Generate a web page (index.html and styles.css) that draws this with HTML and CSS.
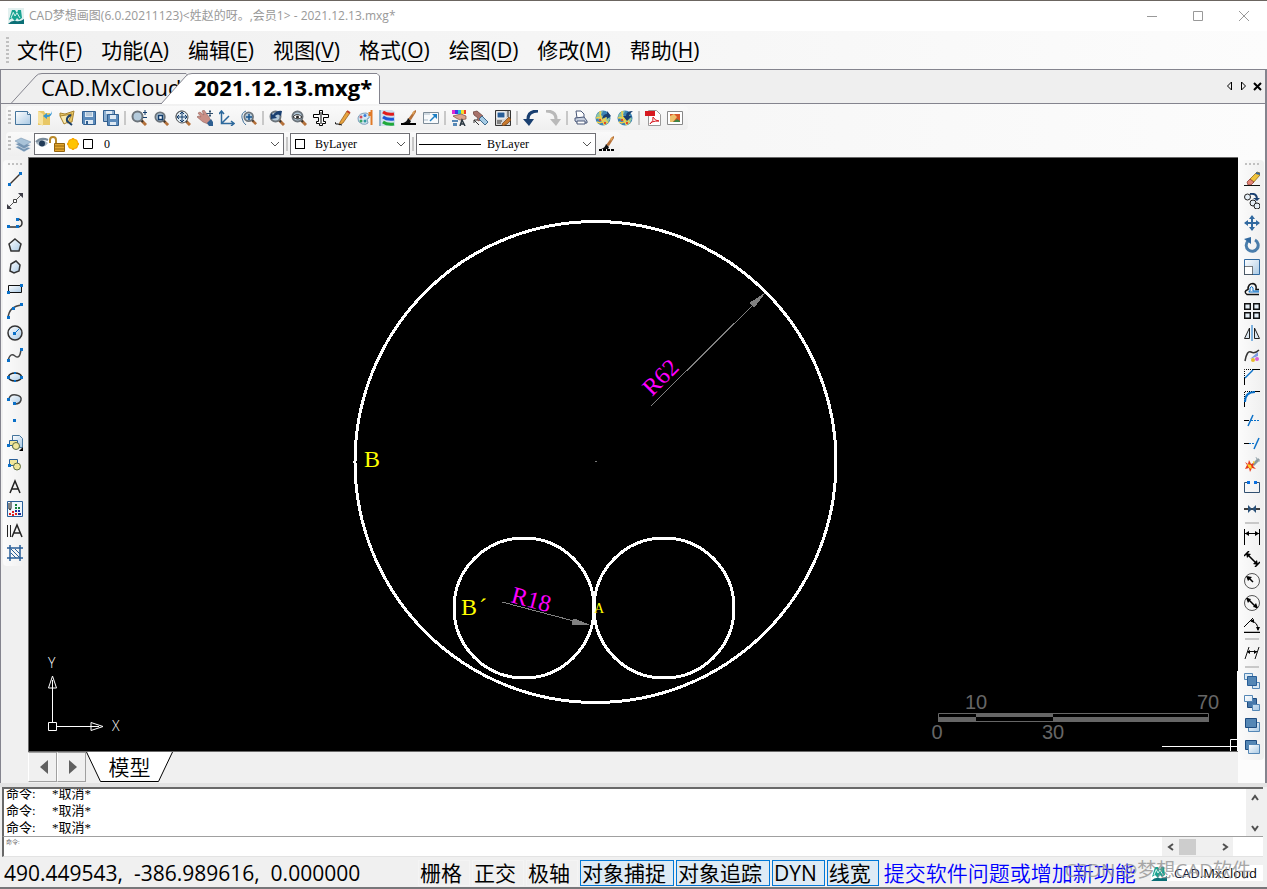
FILE: index.html
```html
<!DOCTYPE html>
<html lang="zh-CN">
<head>
    <meta charset="UTF-8">
    <meta name="viewport" content="width=device-width, initial-scale=1.0">
    <title>CAD梦想画图</title>
    <link rel="stylesheet" href="styles.css">
</head>
<body>

    <!-- shared symbols -->
    <svg class="defs" width="0" height="0" aria-hidden="true">
        <defs>
            <linearGradient id="sheet" x1="0" y1="0" x2="1" y2="1">
                <stop offset="0" stop-color="#ffffff"/>
                <stop offset="1" stop-color="#a9c9e4"/>
            </linearGradient>
            <symbol id="lens" viewBox="0 0 16 16">
                <path d="M10 10l5 5" stroke="#b5713a" stroke-width="3"/>
                <path d="M10 10l2 2" stroke="#333" stroke-width="2"/>
                <circle cx="6.500" cy="6.500" r="5" fill="#b4cbdc" stroke="#6c747b" stroke-width="2"/>
            </symbol>
            <symbol id="globe" viewBox="0 0 16 16">
                <circle cx="8" cy="8" r="7.500" fill="#3d84b4"/>
                <path d="M1 6q3-5 7-5l-2 4 3 2-5 3zM8 9l5-2 2 2-3 5-4 1z" fill="#8fc6a3"/>
                <path d="M2 12Q8 15 12 5M1 8q6-2 12 5M5 1q0 8 5 14" fill="none" stroke="#f2d04a" stroke-width="1.500"/>
                <path d="M4 9h2v2H4zM9 12h2v2H9z" fill="#e14b2a"/>
            </symbol>
            <symbol id="brush" viewBox="0 0 16 16">
                <path d="M7 9l6-8 2-1v2l-5 8z" fill="#b5713a"/>
                <path d="M11 3l2-2 1 1-2 3z" fill="#e0a45a"/>
                <path d="M7 8l3 3-1 2H2q4-1 5-5z" fill="#111"/>
            </symbol>
            <symbol id="logo" viewBox="0 0 16 16">
                <path d="M4 2h3l2 3 1-3h3l1 8-3 2-2-2-2 3-3-3-3 2z" fill="#1aa391"/>
                <path d="M5 4l2 4 2-3 3 5M3 10l2-5" stroke="#d8f4ee" fill="none"/>
                <path d="M0 16q4-4 8-3t8-2v5z" fill="#0b6f76"/>
            </symbol>
        </defs>
    </svg>

    <div class="window">
        <header class="titlebar">
            <svg class="app-icon" viewBox="0 0 16 16"><path d="M0 0h16v16H0z" fill="#e3f1f0"/><use href="#logo"/></svg>
            <h1>CAD梦想画图(6.0.20211123)&lt;姓赵的呀。,会员1&gt; - 2021.12.13.mxg*</h1>
            <div class="window-buttons">
                <button title="最小化"><svg viewBox="0 0 12 12"><path d="M1 6.500h10"/></svg></button>
                <button title="最大化"><svg viewBox="0 0 12 12"><path d="M1.500 1.500h9v9h-9z"/></svg></button>
                <button title="关闭"><svg viewBox="0 0 12 12"><path d="M1 1l10 10M11 1L1 11"/></svg></button>
            </div>
        </header>

        <nav class="menubar">
            <span class="grip"></span>
            <button>文件(<u>F</u>)</button>
            <button>功能(<u>A</u>)</button>
            <button>编辑(<u>E</u>)</button>
            <button>视图(<u>V</u>)</button>
            <button>格式(<u>O</u>)</button>
            <button>绘图(<u>D</u>)</button>
            <button>修改(<u>M</u>)</button>
            <button>帮助(<u>H</u>)</button>
        </nav>

        <div class="tabstrip">
            <button class="tab">
                <svg class="tab-shape" viewBox="0 0 178 31" preserveAspectRatio="none"><path d="M0 30.500L25 3q2-2.500 6-2.500h144l3 3" /></svg>
                <span>CAD.MxCloud</span>
            </button>
            <button class="tab active">
                <svg class="tab-shape" viewBox="0 0 219 31" preserveAspectRatio="none"><path d="M0 31L25 3q2-2.500 6-2.500h185l2.500 2.500v28" /></svg>
                <span>2021.12.13.mxg*</span>
            </button>
            <div class="tab-nav">
                <button title="上一个"><svg viewBox="0 0 10 10"><path d="M6.500 1v8L2.500 5z" fill="none" stroke="#000"/></svg></button>
                <button title="下一个"><svg viewBox="0 0 10 10"><path d="M2.500 1v8l4-4z" fill="none" stroke="#000"/></svg></button>
                <button title="关闭"><svg viewBox="0 0 10 10"><path d="M1 2l7 7M8 2L1 9" stroke="#000" stroke-width="2"/></svg></button>
            </div>
        </div>

        <div class="toolbars">
            <div class="toolbar">
                <span class="grip"></span>
                <button class="tool" title="新建"><svg viewBox="0 0 16 16"><path d="M.5 1.500h12l3 3v10H.5z" fill="url(#sheet)" stroke="#44749c"/><path d="M12.500 1.500v3h3" fill="#fff" stroke="#44749c"/></svg></button>
                <button class="tool" title="打开"><svg viewBox="0 0 16 16"><path d="M1 1h6l1 2h5v12H1z" fill="#e8c766"/><path d="M1 1l5 3v12l-5-3z" fill="#f7e3a0"/><path d="M15 1q-1 4-5 4V3L6 6l4 3V7q5 0 5-6z" fill="#3597d3"/></svg></button>
                <button class="tool" title="打开云图"><svg viewBox="0 0 16 16"><path d="M1 3l5 1 9-3-2 11-5 1-7-7z" fill="#e8c766" stroke="#a8832f"/><path d="M1 6l12-2-4 8-4 2z" fill="#f9e9ad" stroke="#a8832f"/><path d="M12 5q-5 2-4 6l5 4" stroke="#1c4069" stroke-width="2" fill="none"/></svg></button>
                <button class="tool" title="保存"><svg viewBox="0 0 16 16"><path d="M1.500 1.500h13v13h-12l-1-1z" fill="#5c8bbb" stroke="#315f90"/><path d="M4 2h8v5H4z" fill="#dfeaf4"/><path d="M5 3h6M5 5h6" stroke="#8fa8be"/><path d="M4 10h8v4H4z" fill="#dfeaf4"/><path d="M5 11h2v3H5z" fill="#315f90"/></svg></button>
                <button class="tool" title="另存为"><svg viewBox="0 0 16 16"><path d="M.5.5h11v11H.5z" fill="#8fb0d0" stroke="#315f90"/><path d="M3 1h6v3H3z" fill="#dfeaf4"/><path d="M4.500 4.500h11v11h-11z" fill="#5c8bbb" stroke="#315f90"/><path d="M7 5h6v4H7zM7 12h6v3H7z" fill="#dfeaf4"/></svg></button>
                <span class="sep"></span>
                <button class="tool" title="缩放"><svg viewBox="0 0 16 16"><use href="#lens"/><path d="M14 0v5M12 2.500h4M12 7.500h4" stroke="#123c6b"/></svg></button>
                <button class="tool" title="窗口缩放"><svg viewBox="0 0 16 16"><use href="#lens" x="1" y="1" width="15" height="15"/><path d="M5.500 5.500h4v4h-4z" fill="#fff" stroke="#123c6b" stroke-width="1.500"/></svg></button>
                <button class="tool" title="全部缩放"><svg viewBox="0 0 16 16"><use href="#lens"/><circle cx="7" cy="7" r="6" fill="#dce8f0" stroke="#555"/><path d="M7 2v10M2 7h10M5 4l2-2 2 2M5 10l2 2 2-2M4 5L2 7l2 2M10 5l2 2-2 2" fill="none" stroke="#123c6b"/></svg></button>
                <button class="tool" title="平移"><svg viewBox="0 0 16 16"><path d="M1 3l2-1 4 3-2-4 2-1 5 7 2 4-3 3-5-2-6-5 1-1 3 1z" fill="#c98f86" stroke="#8a5750" stroke-width=".5"/><path d="M10 13l4-4 2 3v4h-4z" fill="#2e5f91"/><path d="M13 0v7M9.500 3.500h7M12 1.500h2M12 5.500h2" stroke="#33516e"/></svg></button>
                <button class="tool" title="坐标系"><svg viewBox="0 0 16 16"><path d="M2.500 2v11.500H15M3 13l7-7M0 4l2.500-3L5 4M12 11l3 2.500-3 2.500" fill="none" stroke="#2c689c" stroke-width="1.500"/></svg></button>
                <button class="tool" title="实时缩放"><svg viewBox="0 0 16 16"><path d="M5 1Q0 3 1 8t4 7" stroke="#44749c" fill="none"/><use href="#lens" x="2" width="14" height="14" y="1"/><path d="M8 4v6M5 7h6" stroke="#17558f" stroke-width="1.500"/></svg></button>
                <span class="sep"></span>
                <button class="tool" title="上一视图"><svg viewBox="0 0 16 16"><use href="#lens"/><path d="M2 9V3l2 2q4-5 9-4l-1 5q-3-3-6 0l2 2z" fill="#193f70"/></svg></button>
                <button class="tool" title="动态观察"><svg viewBox="0 0 16 16"><use href="#lens"/><path d="M2 7q4-5 9 0-4 4-9 0z" fill="#fff" stroke="#333"/><circle cx="6.500" cy="7" r="1.500" fill="#222"/></svg></button>
                <button class="tool" title="捕捉"><svg viewBox="0 0 16 16"><path d="M6.500.5h3v4h6v3h-5v4h2v2h-3v2h-3v-2h-3v-2h2v-4h-5v-3h6z" fill="#fff" stroke="#000"/><path d="M8 2v12" stroke="#000"/></svg></button>
                <button class="tool" title="绘制"><svg viewBox="0 0 16 16"><path d="M5 12L12 1l3 2-7 10-4 2z" fill="#e8a33d" stroke="#8a5518" stroke-width=".7"/><path d="M12 1l3 2" stroke="#c23f2b" stroke-width="2"/><path d="M0 12q0 3 3 2l4 1" stroke="#111" fill="none"/></svg></button>
                <button class="tool" title="颜色"><svg viewBox="0 0 16 16"><path d="M1 8q1-5 8-5 4 1 3 5l-2 1 1 4q-2 2-6 1-5-2-4-6z" fill="#d7e7f1" stroke="#7ba0bd"/><circle cx="4" cy="7" r="1.500" fill="#d1495b"/><circle cx="8" cy="5.500" r="1.500" fill="#3b7dd8"/><circle cx="4" cy="11" r="1.500" fill="#3ba55d"/><circle cx="8" cy="11" r="1.500" fill="#2b9aa0"/><path d="M14.500 0v15M12.500 2v4" stroke="#e07a28" stroke-width="2"/></svg></button>
                <button class="tool" title="图层颜色"><svg viewBox="0 0 16 16"><path d="M0 0h13l3 2v14H0z" fill="#cfe0ee"/><path d="M4 2q4 3 11 2" stroke="#e01c1c" stroke-width="3" fill="none"/><path d="M4 7q4 3 11 2" stroke="#1b55d8" stroke-width="3" fill="none"/><path d="M4 12q4 3 11 2" stroke="#1fa83a" stroke-width="3" fill="none"/><path d="M1 0v16" stroke="#8fb2cc" stroke-width="2"/></svg></button>
                <button class="tool" title="线宽"><svg viewBox="0 0 16 16"><use href="#brush"/><path d="M0 13h15v2H0z" fill="#000"/></svg></button>
                <button class="tool" title="图框"><svg viewBox="0 0 16 16"><path d="M.5 2.500h15v11H.5z" fill="#f7fafc" stroke="#7d8c98"/><path d="M1 4h6M1 10h4" stroke="#a9bac7"/><path d="M7 11l5-5" stroke="#1c7fc4" stroke-width="1.500"/><path d="M9 4h5v5z" fill="#1c7fc4"/></svg></button>
                <span class="sep"></span>
                <button class="tool" title="特性"><svg viewBox="0 0 16 16"><path d="M1 0h3v4H1z" fill="#e02ad0"/><path d="M4 0h3v4H4z" fill="#4136e8"/><path d="M7 0h3v4H7z" fill="#23c0d8"/><path d="M10 0h3v4h-3z" fill="#f2de2c"/><path d="M13 0h2v4h-2z" fill="#ed402b"/><path d="M2 6l8-2 5 2v3l-6 1-4-2z" fill="#dba58c" stroke="#7d4c3e" stroke-width=".7"/><path d="M1 10h6v2H1zM2 13h4v3H2z" fill="#5587b5"/><path d="M9 16l2-6 3 6M10 14h3" stroke="#2a3640" fill="none" stroke-width="1.500"/></svg></button>
                <button class="tool" title="特性匹配"><svg viewBox="0 0 16 16"><path d="M0 2l4-1 6 5-4 5-2-1 1-2-4-3z" fill="#a8736b" stroke="#5e3b37" stroke-width=".7"/><path d="M6 9l3-3 6 6-3 3z" fill="#a5cbe5" stroke="#406b8d"/><path d="M6 15l-5-5v3M1 10h3" stroke="#333" fill="none"/></svg></button>
                <button class="tool" title="块编辑"><svg viewBox="0 0 16 16"><path d="M.5.5h15v15H.5z" fill="#d4d4d4" stroke="#333"/><path d="M2 2h8v6H2z" fill="#285e98" stroke="#fff"/><path d="M12 2h2M12 4h2M12 6h2M2 11h5M2 13h4" stroke="#333"/><path d="M7 14l4-4 3-3 2 3-4 4-4 2z" fill="#c8792d" stroke="#774013" stroke-width=".7"/></svg></button>
                <span class="sep"></span>
                <button class="tool" title="撤销"><svg viewBox="0 0 16 16"><path d="M15 1Q5 1 5 9" stroke="#193f70" stroke-width="3" fill="none"/><path d="M0 9h11l-5 7z" fill="#193f70"/></svg></button>
                <button class="tool" title="重做"><svg viewBox="0 0 16 16"><path d="M1 1q10 0 10 8" stroke="#b9b9b9" stroke-width="3" fill="none"/><path d="M5 9h11l-5 7z" fill="#b9b9b9"/></svg></button>
                <span class="sep"></span>
                <button class="tool" title="打印"><svg viewBox="0 0 16 16"><path d="M3 1h5l3 3v4H4z" fill="#fff" stroke="#4a5878"/><path d="M2 8l9-1 3 4v2H5l-3-2z" fill="#c5cede" stroke="#4a5878"/><path d="M4 11h8v3H4z" fill="#fff" stroke="#4a5878"/></svg></button>
                <button class="tool" title="上传"><svg viewBox="0 0 16 16"><use href="#globe"/><path d="M7 9q1-5 5-5V1l4 5-4 3V7q-2 0-5 2z" fill="#193f70"/></svg></button>
                <button class="tool" title="下载"><svg viewBox="0 0 16 16"><use href="#globe"/><path d="M16 1q-7 0-7 5H6l4 5 5-5h-3q0-2 4-5z" fill="#193f70"/></svg></button>
                <span class="sep"></span>
                <button class="tool" title="输出PDF"><svg viewBox="0 0 16 16"><path d="M3.500.5h8l4 4v11h-12z" fill="#fff" stroke="#9a9a9a"/><path d="M0 1h10v5H0z" fill="#d71920"/><path d="M8 7q1 4-3 7 1-3 9-3-4 0-6-4z" fill="none" stroke="#d71920"/></svg></button>
                <button class="tool" title="输出图片"><svg viewBox="0 0 16 16"><path d="M.5 1.500h15v13H.5z" fill="#fff" stroke="#888"/><path d="M3 4h10v8H3z" fill="#d8572a"/><path d="M3 12V6l4-2 3 3-4 5z" fill="#efc16b"/><path d="M6 12l4-3 3 2v1z" fill="#3d8544"/></svg></button>
            </div>
            <div class="toolbar">
                <span class="grip"></span>
                <button class="tool" title="图层"><svg viewBox="0 0 16 16"><path d="M0 11l6-2 10 3-7 4z" fill="#7595b3" stroke="#fff" stroke-width=".5"/><path d="M0 8l6-2 10 3-7 4z" fill="#7595b3" stroke="#fff" stroke-width=".5"/><path d="M0 5l6-3 10 4-7 4z" fill="#a9c3d8" stroke="#6c8ba8" stroke-width=".5"/></svg></button>
                <div class="combo combo-layer">
                    <svg class="layer-state" viewBox="1 0 59 16">
                        <path d="M2 7q5-6 12 0-5 7-12 0z" fill="#a8b8c5"/><path d="M2 6q5-5 12-2" stroke="#7a8c9c" stroke-width="2" fill="none"/><circle cx="8" cy="7.500" r="3" fill="#223b58"/>
                        <path d="M16 7V4q0-3 3-3t3 3v5" stroke="#b98a2b" stroke-width="2" fill="none"/><path d="M20.500 7.500h10v8h-10z" fill="#e3a62f" stroke="#94650f"/><path d="M21 10h9M21 13h9" stroke="#94650f"/>
                        <path d="M39 2v12M33 8h12M35 4l8 8M43 4l-8 8" stroke="#ffb400" stroke-width="2"/><circle cx="39" cy="8" r="5" fill="#ffc400" stroke="#f5a000"/>
                        <path d="M49.500 3.500h9v9h-9z" fill="#fff" stroke="#000"/>
                    </svg>
                    <select aria-label="图层"><option>0</option></select>
                    <svg class="arrow" viewBox="0 0 10 6"><path d="M1 1l4 4 4-4"/></svg>
                </div>
                <span class="sep"></span>
                <div class="combo combo-color">
                    <span class="swatch"></span>
                    <select aria-label="颜色"><option>ByLayer</option></select>
                    <svg class="arrow" viewBox="0 0 10 6"><path d="M1 1l4 4 4-4"/></svg>
                </div>
                <span class="sep"></span>
                <div class="combo combo-line">
                    <span class="line-sample"></span>
                    <select aria-label="线型"><option>ByLayer</option></select>
                    <svg class="arrow" viewBox="0 0 10 6"><path d="M1 1l4 4 4-4"/></svg>
                </div>
                <button class="tool" title="线宽设置"><svg viewBox="0 0 16 16"><use href="#brush"/><path d="M0 14h16" stroke="#000" stroke-width="2" stroke-dasharray="3 1"/></svg></button>
            </div>
        </div>

        <main class="workspace">
            <aside class="palette palette-draw">
                <div class="palette-body">
                    <span class="grip-h"></span>
                    <button class="tool" title="直线"><svg viewBox="0 0 16 16"><path d="M2 14L14 2" stroke="#3c3530" stroke-width="1.500"/><path d="M1 12h3v3H1zM12 1h3v3h-3z" fill="#0a70c8"/></svg></button>
                    <button class="tool" title="构造线"><svg viewBox="0 0 16 16"><path d="M2 14L14 2" stroke="#555"/><path d="M0 16v-5l5 5zM16 0v5l-5-5z" fill="#3e3e48"/><path d="M6.500 6.500h3v3h-3z" fill="#fff" stroke="#444"/></svg></button>
                    <button class="tool" title="多段线"><svg viewBox="0 0 16 16"><path d="M2 12h9M10 4q5 0 5 4t-5 4" stroke="#333" stroke-width="1.500" fill="none"/><path d="M0 10h3v3H0zM9 10h3v3H9zM9 3h3v3H9z" fill="#0a70c8"/></svg></button>
                    <button class="tool" title="正多边形"><svg viewBox="0 0 16 16"><path d="M8 2l6 5-2 7H4L2 7z" fill="url(#sheet)" stroke="#333" stroke-width="1.500"/></svg></button>
                    <button class="tool" title="多边形"><svg viewBox="0 0 16 16"><path d="M4 5l5-3 4 4-1 6-5 2-4-2z" fill="url(#sheet)" stroke="#333" stroke-width="1.500"/></svg></button>
                    <button class="tool" title="矩形"><svg viewBox="0 0 16 16"><path d="M1.500 4.500h13v7h-13z" fill="url(#sheet)" stroke="#111"/><path d="M0 10h3v3H0zM13 3h3v3h-3z" fill="#0a70c8"/></svg></button>
                    <button class="tool" title="圆弧"><svg viewBox="0 0 16 16"><path d="M1 15Q2 3 15 2" stroke="#444" stroke-width="1.500" fill="none"/><path d="M0 13h3v3H0zM5 4h3v3H5zM13 0h3v3h-3z" fill="#0a70c8"/></svg></button>
                    <button class="tool" title="圆"><svg viewBox="0 0 16 16"><circle cx="8" cy="8" r="7" fill="url(#sheet)" stroke="#333" stroke-width="1.500"/><path d="M8 8l4-4" stroke="#0a70c8"/><path d="M6 7h3v3H6z" fill="#0a70c8"/></svg></button>
                    <button class="tool" title="样条曲线"><svg viewBox="0 0 16 16"><path d="M1 14Q3 5 8 9t6-7" stroke="#444" stroke-width="1.500" fill="none"/><path d="M0 12h3v3H0zM13 1h3v3h-3z" fill="#0a70c8"/></svg></button>
                    <button class="tool" title="椭圆"><svg viewBox="0 0 16 16"><ellipse cx="8" cy="8" rx="6.500" ry="4" fill="url(#sheet)" stroke="#222" stroke-width="1.500"/><path d="M0 7h3v3H0zM13 7h3v3h-3zM7 3h2v2H7zM7 11h2v2H7z" fill="#0a70c8"/></svg></button>
                    <button class="tool" title="椭圆弧"><svg viewBox="0 0 16 16"><path d="M2 8q1-5 7-4 6 1 5 5-1 4-6 4" fill="url(#sheet)" stroke="#444" stroke-width="1.500"/><path d="M0 7h3v3H0zM6 11h3v3H6z" fill="#0a70c8"/></svg></button>
                    <button class="tool" title="点"><svg viewBox="0 0 16 16"><path d="M6 6h3v3H6z" fill="#0a70c8"/></svg></button>
                    <button class="tool" title="插入块"><svg viewBox="0 0 16 16"><path d="M5.500.5h7l3 3v9h-10z" fill="url(#sheet)" stroke="#44749c"/><path d="M2.500 5.500h8v5h-8z" fill="#f1e79b" stroke="#285e98"/><circle cx="9" cy="11" r="3.500" fill="#f1e79b" stroke="#5d6d3f"/><path d="M0 9h3v3H0z" fill="#0a70c8"/><path d="M16 12v4h-4z" fill="#000"/></svg></button>
                    <button class="tool" title="创建块"><svg viewBox="0 0 16 16"><path d="M2.500 2.500h8v6h-8z" fill="#f1e79b" stroke="#285e98"/><circle cx="10" cy="9.500" r="3.500" fill="#f1e79b" stroke="#5d6d3f"/><path d="M1 7h3v3H1z" fill="#0a70c8"/></svg></button>
                    <button class="tool" title="单行文字"><svg viewBox="0 0 16 16"><path d="M3 14L8 2l5 12M5 10h6" stroke="#222" stroke-width="1.500" fill="none"/></svg></button>
                    <button class="tool" title="图案"><svg viewBox="0 0 16 16"><path d="M.5.5h15v15H.5z" fill="#eff5fb" stroke="#285e98"/><path d="M2 2v6q2 2 2-1V1" stroke="#111" fill="none"/><path d="M8 3h2v2H8zM8 6h2v2H8zM11 6h2v2h-2z" fill="#138038"/><path d="M2 12h2v2H2zM5 10h2v2H5zM8 12h2v2H8zM5 13h2v2H5z" fill="#e12020"/><path d="M8 9h2v2H8zM11 9h2v2h-2zM11 12h3v2h-3z" fill="#1c2f9a"/></svg></button>
                    <button class="tool" title="多行文字"><svg viewBox="0 0 16 16"><path d="M.5 2v12M3.500 2v12" stroke="#222"/><path d="M5 14l5-12 5 12M7 10h6" stroke="#222" stroke-width="1.500" fill="none"/></svg></button>
                    <button class="tool" title="填充"><svg viewBox="0 0 16 16"><path d="M3 0v16M13 0v16M0 3h16M0 13h16" stroke="#285e98" stroke-width="1.500"/><path d="M4 4l9 9M4 8l5 5M8 4l5 5" stroke="#285e98"/></svg></button>
                </div>
            </aside>

            <section class="view">
                <svg class="drawing" viewBox="29 158 1209 593">
                    <g class="outline">
                        <circle cx="595.500" cy="462" r="240.500"/>
                        <circle cx="524" cy="608" r="70"/>
                        <circle cx="664" cy="608" r="70"/>
                    </g>
                    <path d="M595 461h2v1h-2z" fill="#777"/>
                    <g class="dimension">
                        <path d="M651 406L765 293M502 602L589 625"/>
                        <path d="M764 294l-10 13-4-4zM589 625l-17-1 2-5z"/>
                        <text transform="translate(652 397) rotate(-45)">R62</text>
                        <text transform="translate(510 602) rotate(15)">R18</text>
                    </g>
                    <g class="note">
                        <text x="364" y="467">B</text>
                        <text x="461" y="615">B<tspan x="479">´</tspan></text>
                        <text class="note-small" x="594" y="613">A</text>
                    </g>
                    <g class="ucs">
                        <path d="M48.500 722.500h8v8h-8zM52.500 722v-35M57 726.500h34M52.500 676l-4 12h8zM52.500 680v8M103 726.500l-12-4v8zM99 726.500h-8"/>
                        <text x="48" y="668">Y</text>
                        <text x="112" y="731">X</text>
                    </g>
                    <g class="scale">
                        <path d="M938.500 713.500h270v8h-270z" fill="none" stroke="#666"/>
                        <path d="M976 713h77v4h-77zM938 717h38v5h-38zM1053 717h156v5h-156z"/>
                        <text x="976" y="709">10</text>
                        <text x="1208" y="709">70</text>
                        <text x="937" y="739">0</text>
                        <text x="1053" y="739">30</text>
                    </g>
                    <path class="cursor" d="M1162 746.500h76M1237.500 671v80M1238 739.500h-7.500v12"/>
                </svg>
                <div class="sheetbar">
                    <button class="sheet-nav" title="上一页"><svg viewBox="0 0 10 16"><path d="M9 1v14L1 8z"/></svg></button>
                    <button class="sheet-nav" title="下一页"><svg viewBox="0 0 10 16"><path d="M1 1v14l8-7z"/></svg></button>
                    <button class="sheet-tab">
                        <svg viewBox="0 0 87 30" preserveAspectRatio="none"><path d="M.5 0l14 29.500h58L86.500 0" fill="#fff" stroke="#000"/></svg>
                        <span>模型</span>
                    </button>
                </div>
            </section>

            <aside class="palette palette-modify">
                <div class="palette-body">
                    <span class="grip-h"></span>
                    <button class="tool" title="删除"><svg viewBox="0 0 16 16"><path d="M6 8l7-7 3 1v2l-7 8z" fill="#efc33b" stroke="#80560c" stroke-width=".7"/><path d="M12 2l4 1" stroke="#3a6698" stroke-width="2"/><path d="M3 11l3-3 4 3-3 3H4z" fill="#e28578" stroke="#823229" stroke-width=".7"/><path d="M0 14.500h16" stroke="#111"/></svg></button>
                    <button class="tool" title="复制"><svg viewBox="0 0 16 16"><circle cx="3.500" cy="4" r="3" fill="#e6eff7" stroke="#222"/><path d="M6 1q6-1 7 4" stroke="#193f70" stroke-width="2" fill="none"/><path d="M9 5h7l-3 3z" fill="#193f70"/><circle cx="9" cy="10" r="3" fill="#e6eff7" stroke="#222"/><circle cx="13" cy="13" r="3" fill="#e6eff7" stroke="#222"/></svg></button>
                    <button class="tool" title="移动"><svg viewBox="0 0 16 16"><path d="M8 1v14M1 8h14" stroke="#326aa0" stroke-width="2"/><path d="M8 0l3 4H5zM8 16l3-4H5zM0 8l4-3v6zM16 8l-4-3v6z" fill="#326aa0"/></svg></button>
                    <button class="tool" title="旋转"><svg viewBox="0 0 16 16"><path d="M4 4a6 6 0 1 0 7-1" stroke="#4a7dab" stroke-width="3" fill="none"/><path d="M0 2l7-2v7z" fill="#326aa0"/></svg></button>
                    <button class="tool" title="缩放"><svg viewBox="0 0 16 16"><path d="M.5.5h15v15H.5z" fill="url(#sheet)" stroke="#326aa0"/><path d="M.5 7.500h8v8h-8z" fill="#fff" stroke="#000" stroke-dasharray="1 1"/></svg></button>
                    <button class="tool" title="偏移"><svg viewBox="0 0 16 16"><path d="M15 13.500H3q-4-3 1-5 0-6 5-6 4 1 3 6h3" stroke="#111" stroke-width="1.500" fill="none"/><path d="M15 11H5q-1 0 1-1V7q2-3 3 0v3h6" stroke="#0a70c8" fill="none"/></svg></button>
                    <button class="tool" title="阵列"><svg viewBox="0 0 16 16"><path d="M.7.7h5.600v5.600H.7zM9.700.7h5.600v5.600H9.700zM.7 9.700h5.600v5.600H.7zM9.700 9.700h5.600v5.600H9.700z" fill="#e3edf5" stroke="#111" stroke-width="1.400"/></svg></button>
                    <button class="tool" title="镜像"><svg viewBox="0 0 16 16"><path d="M5.500 3v10.500h-5zM10.500 3v10.500h5z" fill="#dce8f2" stroke="#222"/><path d="M8 0v16" stroke="#0a70c8"/></svg></button>
                    <button class="tool" title="编辑样条"><svg viewBox="0 0 16 16"><path d="M1 14q2-11 6-9t8-2" stroke="#333" stroke-width="1.500" fill="none"/><path d="M6 12l8-7v4z" fill="#7b9be0"/><circle cx="9" cy="13" r="2" fill="#e5b92c"/><circle cx="13" cy="12" r="2" fill="#d862d8"/></svg></button>
                    <button class="tool" title="倒角"><svg viewBox="0 0 16 16"><path d="M.5 16V9M9 .5h7" stroke="#000"/><path d="M.5 9V.5H9" stroke="#000" fill="none" stroke-dasharray="1 1"/><path d="M1 9l8-8" stroke="#0a70c8" stroke-width="1.500"/></svg></button>
                    <button class="tool" title="圆角"><svg viewBox="0 0 16 16"><path d="M.5 16v-6M10 .5h6" stroke="#000"/><path d="M.5 10V.5H10" stroke="#000" fill="none" stroke-dasharray="1 1"/><path d="M1 11Q1 1 11 1" stroke="#0a70c8" stroke-width="2" fill="none"/></svg></button>
                    <button class="tool" title="修剪"><svg viewBox="0 0 16 16"><path d="M0 7.500h5" stroke="#000"/><path d="M4 13l5-11" stroke="#0a70c8" stroke-width="1.500"/><path d="M7 7.500h9" stroke="#0a70c8" stroke-dasharray="2 1"/></svg></button>
                    <button class="tool" title="延伸"><svg viewBox="0 0 16 16"><path d="M0 8.500h5" stroke="#000"/><path d="M5 8.500h6" stroke="#0a70c8" stroke-dasharray="2 1"/><path d="M10 14l5-11" stroke="#0a70c8" stroke-width="1.500"/></svg></button>
                    <button class="tool" title="分解"><svg viewBox="0 0 16 16"><path d="M8 7l6-6 2 2-6 6z" fill="#8a9aa0"/><path d="M12 0l1 3M14 4h2" stroke="#a6b4ba"/><path d="M1 5l3 2 1-4 2 4 3-1-1 3 3 3-4-1-2 4-1-4-4 1 2-4z" fill="#e5391c"/><path d="M3 7l4 1 1 4-3-1zM9 4l2 1-2 2z" fill="#ffd531"/></svg></button>
                    <button class="tool" title="打断"><svg viewBox="0 0 16 16"><path d="M3 3.500H.5v10h15v-10H13" stroke="#315070" fill="none"/><path d="M3 2h3v3H3zM10 2h3v3h-3z" fill="#0a70e0"/></svg></button>
                    <button class="tool" title="合并"><svg viewBox="0 0 16 16"><path d="M0 8h16" stroke="#000" stroke-width="1.500"/><path d="M4 4l4 4-4 4zM12 4L8 8l4 4z" fill="#285078"/></svg></button>
                    <span class="sep-h"></span>
                    <button class="tool" title="线性标注"><svg viewBox="0 0 16 16"><path d="M.5 0v16M15.500 0v16M1 4.500h14" stroke="#000"/><path d="M1 4.500L5 2v5zM15 4.500L11 2v5z"/></svg></button>
                    <button class="tool" title="对齐标注"><svg viewBox="0 0 16 16"><path d="M5 0L0 5M16 11l-5 5M3 3l10 10" stroke="#000" stroke-width="1.500"/><path d="M2 2l5 1-4 4zM14 14l-5-1 4-4z"/></svg></button>
                    <button class="tool" title="半径标注"><svg viewBox="0 0 16 16"><circle cx="8" cy="8" r="7.500" fill="#f5f5f5" stroke="#555"/><path d="M9 9L4 4" stroke="#000" stroke-width="1.500"/><path d="M2 3l6 1-4 4z"/></svg></button>
                    <button class="tool" title="直径标注"><svg viewBox="0 0 16 16"><circle cx="8" cy="8" r="7.500" fill="#f5f5f5" stroke="#555"/><path d="M3 3l10 10" stroke="#000" stroke-width="1.500"/><path d="M2 3l5 1-3 4zM14 13l-5-1 3-4z"/></svg></button>
                    <button class="tool" title="角度标注"><svg viewBox="0 0 16 16"><path d="M0 15.500h16" stroke="#000" stroke-width="1.500"/><path d="M0 10L9 1M7 4q7 1 7 9" stroke="#000" fill="none"/><path d="M6 4l4-2v4zM14 14l-2-4h4z"/></svg></button>
                    <span class="sep-h"></span>
                    <button class="tool" title="编辑标注"><svg viewBox="0 0 16 16"><path d="M1 14L5 2M11 14l4-12M4 6.500h9" stroke="#111"/><path d="M3 7l3-2v4zM13 7l-3-2v4z"/></svg></button>
                    <span class="sep-h"></span>
                    <button class="tool" title="前置"><svg viewBox="0 0 16 16"><path d="M.5.5h8v6h-8zM8.500 9.500h7v6h-7z" fill="#dceaf4" stroke="#5587b5"/><path d="M3.500 3.500h9v9h-9z" fill="#5587b5" stroke="#285e98"/></svg></button>
                    <button class="tool" title="后置"><svg viewBox="0 0 16 16"><path d="M3.500 3.500h9v9h-9z" fill="#4878aa" stroke="#1e4c80"/><path d="M.5.5h8v6h-8zM8.500 9.500h7v6h-7z" fill="url(#sheet)" stroke="#5587b5"/></svg></button>
                    <button class="tool" title="置于对象之上"><svg viewBox="0 0 16 16"><path d="M4.500 5.500h11v9h-11z" fill="url(#sheet)" stroke="#5587b5"/><path d="M1.500 1.500h11v9h-11z" fill="#5587b5" stroke="#1e4c80"/></svg></button>
                    <button class="tool" title="置于对象之下"><svg viewBox="0 0 16 16"><path d="M1.500 1.500h11v9h-11z" fill="#5587b5" stroke="#1e4c80"/><path d="M4.500 5.500h11v9h-11z" fill="url(#sheet)" stroke="#5587b5"/></svg></button>
                </div>
            </aside>
        </main>

        <section class="command">
            <div class="history">
                <ul>
                    <li><span>命令:</span>*取消*</li>
                    <li><span>命令:</span>*取消*</li>
                    <li><span>命令:</span>*取消*</li>
                </ul>
                <div class="scroll-v">
                    <button title="向上"><svg viewBox="0 0 8 8"><path d="M1 6l3-4 3 4"/></svg></button>
                    <button title="向下"><svg viewBox="0 0 8 8"><path d="M1 2l3 4 3-4"/></svg></button>
                </div>
            </div>
            <div class="prompt">
                <label for="cmd">命令:</label>
                <input id="cmd" type="text">
                <div class="scroll-h">
                    <button title="向左"><svg viewBox="0 0 8 8"><path d="M6 1L2 4l4 3"/></svg></button>
                    <span class="thumb"></span>
                    <button title="向右"><svg viewBox="0 0 8 8"><path d="M2 1l4 3-4 3"/></svg></button>
                </div>
            </div>
        </section>

        <footer class="statusbar">
            <output class="coords">490.449543,  -386.989616,  0.000000</output>
            <button>栅格</button>
            <button>正交</button>
            <button>极轴</button>
            <button class="on">对象捕捉</button>
            <button class="on">对象追踪</button>
            <button class="on">DYN</button>
            <button class="on">线宽</button>
            <a href="#">提交软件问题或增加新功能</a>
            <div class="brand">
                <svg viewBox="0 0 16 16"><use href="#logo"/></svg>
                <span>CAD.<b>MxCloud</b></span>
            </div>
            <span class="watermark">CSDN @梦想CAD软件</span>
        </footer>
    </div>

</body>
</html>
```
FILE: styles.css
```css
* {
    box-sizing: border-box;
}
body {
    margin: 0;
    font-family: "Open Sans", "Noto Sans CJK SC", sans-serif;
    color: #000;
    background-color: #f0f0f0;
}
button {
    padding: 0;
    border: none;
    background: none;
    font: inherit;
    color: inherit;
    white-space: nowrap;
}
svg {
    display: block;
}
.defs {
    position: absolute;
}
.window {
    display: flex;
    flex-direction: column;
    height: 100vh;
    border-top: 1px solid #6b6560;
    border-bottom: 2px solid #77777a;
    overflow: hidden;
}

/* title */
.titlebar {
    display: flex;
    align-items: center;
    height: 30px;
    padding-left: 8px;
    background-color: #fff;
    flex: none;
}
.app-icon {
    width: 16px;
    height: 16px;
}
.titlebar h1 {
    flex: 1;
    margin: 0 0 0 5px;
    font-size: 12px;
    line-height: 16px;
    font-weight: normal;
    color: #999;
}
.window-buttons {
    display: flex;
}
.window-buttons button {
    display: grid;
    place-items: center;
    width: 46px;
    height: 30px;
}
.window-buttons svg {
    width: 12px;
    height: 12px;
    fill: none;
    stroke: #999;
}

/* menu */
.menubar {
    display: flex;
    align-items: center;
    gap: 19px;
    height: 38px;
    padding-left: 6px;
    background: linear-gradient(to right, #f0f0f0, #fcfcfc);
    font-size: 21px;
    line-height: 30px;
    flex: none;
}
.menubar .grip {
    height: 26px;
    margin-right: -11px;
}
.menubar u {
    text-decoration-thickness: 1px;
    text-underline-offset: 3px;
}
.grip {
    width: 3px;
    height: 16px;
    background: repeating-linear-gradient(to bottom, #c0c0c0 0 2px, transparent 2px 4px);
    flex: none;
}

/* document tabs */
.tabstrip {
    display: flex;
    align-items: flex-end;
    height: 35px;
    padding-left: 10px;
    border: 1px solid #84848e;
    border-right-width: 2px;
    background-color: #efefef;
    flex: none;
}
.tab {
    position: relative;
    height: 31px;
    width: 178px;
    padding: 0 0 2px 30px;
    text-align: left;
    font-size: 22px;
    line-height: 27px;
    margin-bottom: -1px;
}
.tab span {
    position: relative;
}
.tab-shape {
    position: absolute;
    inset: 0;
    width: 100%;
    height: 100%;
    fill: none;
    stroke: #84848e;
}
.tab.active {
    width: 219px;
    margin-left: -28px;
    padding-left: 33px;
    font-weight: bold;
}
.active .tab-shape {
    fill: #fff;
}
.tab-nav {
    display: flex;
    gap: 4px;
    margin: 0 2px 12px auto;
}
.tab-nav svg {
    width: 10px;
    height: 10px;
}

/* toolbars */
.toolbars {
    display: flex;
    flex-direction: column;
    align-items: flex-start;
    gap: 2px;
    padding: 2px 0 1px 5px;
    border-left: 1px solid #84848e;
    border-right: 2px solid #84848e;
    background: linear-gradient(to right, #f0f0f0, #fcfcfc);
    flex: none;
}
.toolbar {
    display: flex;
    align-items: center;
    height: 24px;
    padding: 0 2px;
    border-radius: 4px;
    background: linear-gradient(to bottom, #fafafa, #efefef);
}
.toolbar .grip {
    margin-right: 1px;
}
.tool {
    display: grid;
    place-items: center;
    width: 22px;
    height: 22px;
}
.tool svg {
    width: 16px;
    height: 16px;
}
.sep {
    width: 2px;
    height: 14px;
    margin: 0 2px;
    background-color: #c8c8c8;
}
.combo {
    display: flex;
    align-items: center;
    height: 22px;
    padding: 0 3px;
    border: 1px solid #6f6f74;
    background-color: #fff;
}
.combo select {
    flex: 1;
    min-width: 0;
    height: 18px;
    padding: 0;
    border: none;
    background: none;
    appearance: none;
    font-family: "Liberation Serif", serif;
    font-size: 12px;
    color: #000;
}
.combo-layer {
    width: 250px;
    padding-left: 0;
}
.combo-color {
    width: 120px;
}
.combo-line {
    width: 180px;
    padding-left: 2px;
}
.layer-state {
    width: 59px;
    height: 16px;
    margin-right: 10px;
}
.swatch {
    width: 10px;
    height: 10px;
    margin: 0 10px 0 1px;
    border: 1px solid #000;
}
.line-sample {
    width: 62px;
    height: 1px;
    margin-right: 6px;
    background-color: #000;
}
.arrow {
    width: 10px;
    height: 6px;
    fill: none;
    stroke: #555;
    pointer-events: none;
}

/* workspace */
.workspace {
    display: flex;
    flex: 1;
    min-height: 0;
    border-left: 1px solid #84848e;
    border-right: 2px solid #84848e;
}
.palette {
    width: 27px;
    padding: 3px 0 0 2px;
    flex: none;
    overflow: hidden;
}
.palette-draw {
    padding-right: 1px;
}
.palette-modify {
    padding: 3px 1px 0 1px;
    background-color: #fcfcfc;
}
.palette-body {
    display: flex;
    flex-direction: column;
    align-items: center;
    padding: 3px 1px 2px;
    border-radius: 4px;
    background: linear-gradient(to right, #fbfbfb, #efefef);
}
.grip-h {
    width: 14px;
    height: 2px;
    margin-bottom: 3px;
    background: repeating-linear-gradient(to right, #c0c0c0 0 2px, transparent 2px 4px);
}
.sep-h {
    width: 14px;
    height: 2px;
    margin: 2px 0;
    background-color: #c8c8c8;
}
.view {
    display: flex;
    flex-direction: column;
    flex: 1;
    min-width: 0;
}
.drawing {
    flex: 1;
    width: 100%;
    min-height: 0;
    border: 1px solid #696969;
    border-right: none;
    background-color: #000;
}
.outline {
    fill: none;
    stroke: #fff;
    stroke-width: 3;
    shape-rendering: crispEdges;
}
.dimension path {
    fill: #808080;
    stroke: #808080;
    shape-rendering: crispEdges;
}
.dimension text {
    fill: #f0f;
    font-family: "Liberation Serif", serif;
    font-size: 24px;
}
.note text {
    fill: #ff0;
    font-family: "Liberation Serif", serif;
    font-size: 24px;
}
.note .note-small {
    font-size: 14px;
}
.ucs path, .cursor {
    fill: none;
    stroke: #fff;
}
.ucs text {
    fill: #fff;
    font-family: "Open Sans", sans-serif;
    font-size: 14px;
    font-weight: 300;
}
.scale {
    fill: #666;
    font-family: "Liberation Sans", sans-serif;
    font-size: 20px;
    text-anchor: middle;
}
.sheetbar {
    display: flex;
    height: 31px;
    flex: none;
}
.sheet-nav {
    display: grid;
    place-items: center;
    width: 29px;
    height: 30px;
    padding-left: 2px;
    border: 1px solid #a0a0a0;
    border-left-color: #fff;
}
.sheet-nav svg {
    width: 10px;
    height: 16px;
    fill: #606060;
}
.sheet-tab {
    position: relative;
    width: 87px;
    height: 30px;
    font-size: 21px;
    line-height: 30px;
    font-weight: 350;
}
.sheet-tab svg {
    position: absolute;
    inset: 0;
    width: 100%;
    height: 100%;
}
.sheet-tab span {
    position: relative;
}

/* command line */
.command {
    flex: none;
    padding: 0 4px 0 2px;
    border-top: 4px solid #e3e3e3;
    background-color: #f0f0f0;
}
.history {
    display: flex;
    height: 50px;
    border-top: 2px solid #696969;
    border-left: 2px solid #696969;
    border-bottom: 1px solid #a0a0a0;
    background-color: #fff;
}
.history ul {
    display: flex;
    flex-direction: column;
    justify-content: flex-end;
    flex: 1;
    margin: 0;
    padding: 0 2px;
    list-style: none;
    overflow: hidden;
    font-family: "Liberation Serif", "Noto Sans CJK SC", serif;
    font-size: 13px;
    line-height: 17px;
}
.history li {
    display: flex;
    flex: none;
}
.history li span {
    width: 46px;
}
.scroll-v {
    display: flex;
    flex-direction: column;
    justify-content: space-between;
    width: 17px;
    background-color: #f0f0f0;
}
.scroll-v button, .scroll-h button {
    display: grid;
    place-items: center;
    width: 17px;
    height: 17px;
}
.scroll-v svg, .scroll-h svg {
    width: 8px;
    height: 8px;
    fill: none;
    stroke: #505050;
    stroke-width: 2;
}
.prompt {
    display: flex;
    height: 20px;
    padding: 0 30px 0 2px;
    border-left: 2px solid #696969;
    border-bottom: 1px solid #e3e3e3;
    background-color: #fff;
}
.prompt label {
    font-size: 6px;
    line-height: 10px;
    color: #666;
}
.prompt input {
    flex: 1;
    min-width: 0;
    border: none;
    padding: 0 4px;
    outline: none;
    font-size: 12px;
}
.scroll-h {
    display: flex;
    align-items: center;
    width: 71px;
    background-color: #f0f0f0;
}
.scroll-h button:last-child {
    margin-left: auto;
}
.thumb {
    width: 17px;
    height: 16px;
    background-color: #cdcdcd;
}

/* status */
.statusbar {
    position: relative;
    display: flex;
    align-items: center;
    gap: 2px;
    height: 30px;
    padding: 2px 4px 0;
    background-color: #f0f0f0;
    font-size: 21px;
    line-height: 24px;
    flex: none;
}
.coords {
    width: 412px;
    white-space: pre;
}
.statusbar button {
    height: 26px;
    padding: 0 7px 0 1px;
    border: 1px solid #f4f4f4;
}
.statusbar .on {
    border-color: #0078d7;
    background-color: #deebf5;
}
.statusbar a {
    margin-left: 3px;
    color: #00f;
    font-weight: 350;
    text-decoration: none;
    white-space: nowrap;
}
.brand {
    display: flex;
    align-items: center;
    gap: 7px;
    height: 16px;
    margin-left: auto;
    padding-right: 6px;
    background-color: #fff;
    font-size: 13px;
    line-height: 16px;
    color: #17203a;
}
.brand svg {
    width: 16px;
    height: 16px;
}
.brand b {
    color: #000;
    font-weight: normal;
}
.watermark {
    position: absolute;
    right: 16px;
    bottom: 5px;
    font-size: 19px;
    color: #8c8c8c;
    opacity: 0.75;
    pointer-events: none;
}
```
